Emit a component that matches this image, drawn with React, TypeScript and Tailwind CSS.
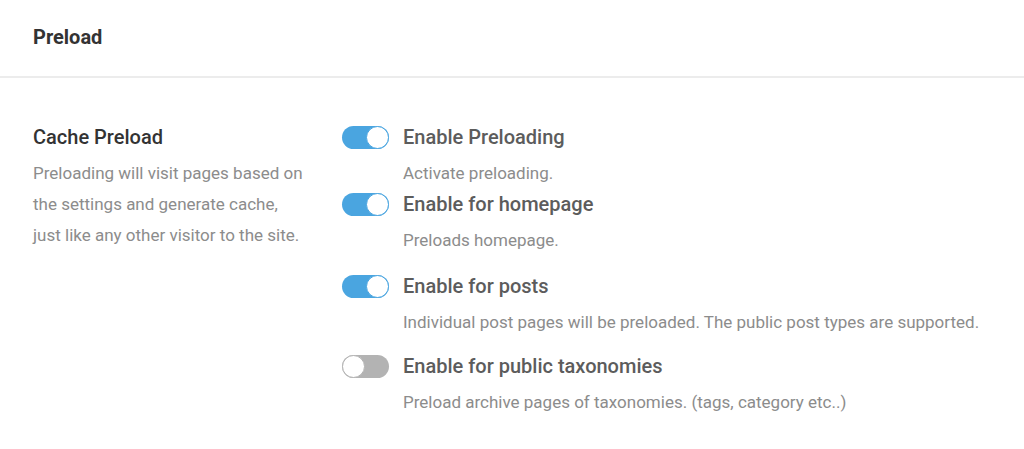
const options = [
  { label: 'Enable Preloading', desc: 'Activate preloading.', on: true, mt: 'mt-0' },
  { label: 'Enable for homepage', desc: 'Preloads homepage.', on: true, mt: 'mt-[7px]' },
  { label: 'Enable for posts', desc: 'Individual post pages will be preloaded. The public post types are supported.', on: true, mt: 'mt-[22px]' },
  { label: 'Enable for public taxonomies', desc: 'Preload archive pages of taxonomies. (tags, category etc..)', on: false, mt: 'mt-[20px]' },
]

function Toggle({ on }: { on: boolean }) {
  return (
    <span
      className={
        'relative inline-flex h-[23px] w-[47px] shrink-0 items-center rounded-full ' +
        (on ? 'bg-[#4aa5e0]' : 'bg-[#b3b3b3]')
      }
    >
      <span
        className={
          'absolute top-0 h-[23px] w-[23px] rounded-full border bg-white ' +
          (on ? 'right-0 border-[#4aa5e0]' : 'left-0 border-[#b3b3b3]')
        }
      />
    </span>
  )
}

export default function App() {
  return (
    <main className="min-h-screen w-full bg-white font-['Roboto',sans-serif]">
      <header className="flex h-[78px] items-center border-b-2 border-[#ececec] px-[33px] pb-[3px]">
        <h1 className="text-[20px] font-bold text-[#333]">Preload</h1>
      </header>
      <section className="flex px-[33px] pt-[47px]">
        <div className="w-[309px] shrink-0">
          <h2 className="text-[20px] font-medium leading-6 text-[#333]">Cache Preload</h2>
          <p className="mt-[9px] w-[274px] text-[17px] leading-[31px] text-[#8c8c8c]">
            Preloading will visit pages based on the settings and generate cache, just like any other visitor to the site.
          </p>
        </div>
        <div className="flex flex-col">
          {options.map((o) => (
            <div key={o.label} className={o.mt}>
              <label className="flex items-center gap-[14px]">
                <Toggle on={o.on} />
                <span className="text-[20px] font-medium leading-6 text-[#5c5c5c]">{o.label}</span>
              </label>
              <p className="mt-[12px] pl-[61px] text-[17px] leading-6 text-[#8c8c8c]">{o.desc}</p>
            </div>
          ))}
        </div>
      </section>
    </main>
  )
}
